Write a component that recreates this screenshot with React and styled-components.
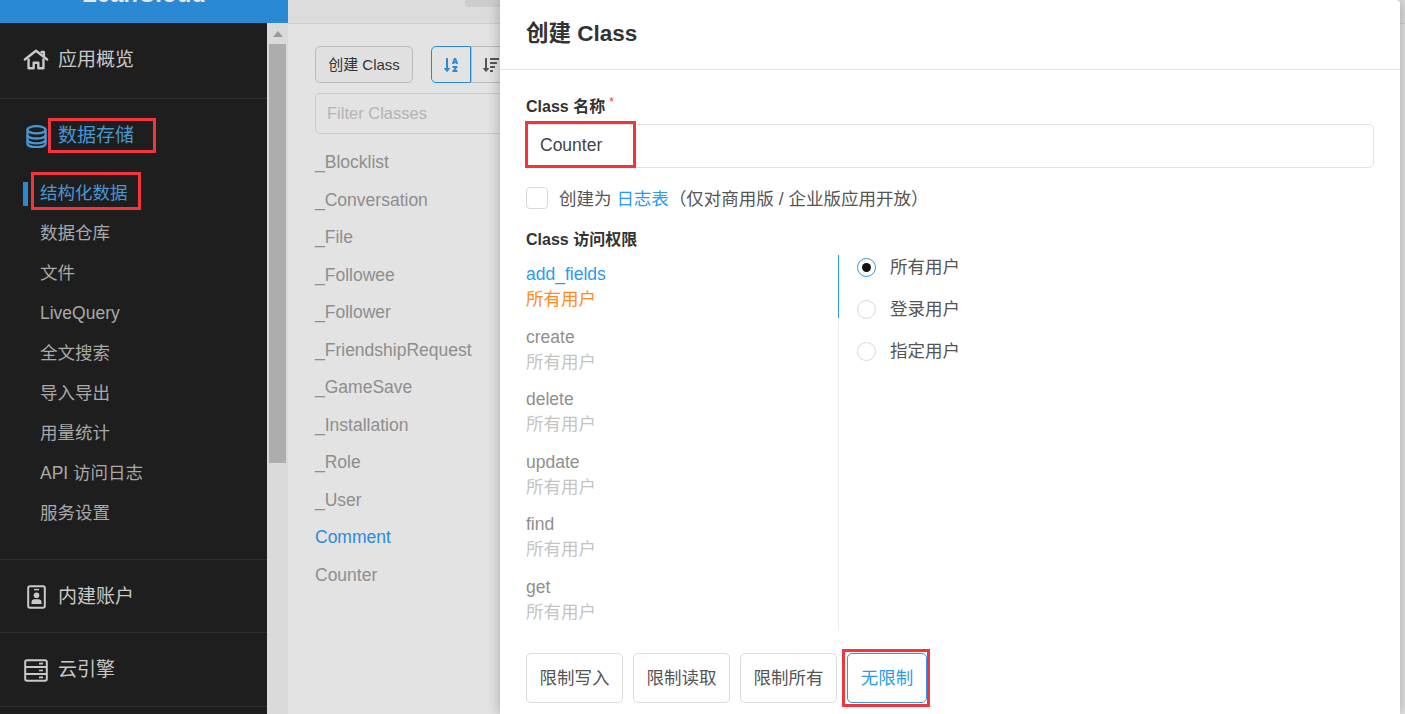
import React from "react";
import styled, { createGlobalStyle } from "styled-components";
import { FaSortAlphaDown, FaSortAmountDown } from "react-icons/fa";

const GlobalStyle = createGlobalStyle`
  html, body {
    margin: 0;
    padding: 0;
    height: 100%;
    overflow: hidden;
    font-family: "Liberation Sans", "Noto Sans CJK SC", sans-serif;
  }
  * { box-sizing: border-box; }
`;

const HomeIcon = () => (
  <svg width="28" height="23" viewBox="0 0 28 23" fill="none" stroke="currentColor" strokeWidth="2.6" strokeLinejoin="round" strokeLinecap="round">
    <path d="M2 11.5 14 2l12 9.5" />
    <path d="M20 3.5h2.5V8" />
    <path d="M6 11.5V21h5.5v-6h5v6H22v-9.5" />
  </svg>
);

const DatabaseIcon = () => (
  <svg width="21" height="23" viewBox="0 0 22 24" fill="none" stroke="currentColor" strokeWidth="2.4">
    <ellipse cx="11" cy="5" rx="9.5" ry="3.8" />
    <path d="M1.5 5v14.5c0 2.1 4.3 3.6 9.5 3.6s9.5-1.5 9.5-3.6V5" />
    <path d="M1.5 10.5c0 2.1 4.3 3.6 9.5 3.6s9.5-1.5 9.5-3.6" />
    <path d="M1.5 15.5c0 2.1 4.3 3.6 9.5 3.6s9.5-1.5 9.5-3.6" />
  </svg>
);

const ContactIcon = () => (
  <svg width="19" height="24" viewBox="0 0 19 24" fill="none">
    <rect x="1.2" y="1.2" width="16.6" height="21.6" rx="1.8" stroke="currentColor" strokeWidth="2" />
    <path d="M7 4.6h5" stroke="currentColor" strokeWidth="1.4" />
    <circle cx="9.5" cy="10.2" r="2.8" fill="currentColor" />
    <path d="M4.5 19v-2.2c0-1.6 1.4-2.6 3-2.6h4c1.6 0 3 1 3 2.6V19z" fill="currentColor" />
  </svg>
);

const ServerIcon = () => (
  <svg width="24" height="23" viewBox="0 0 24 23" fill="none" stroke="currentColor">
    <rect x="1.2" y="1.2" width="21.6" height="20.6" rx="1.8" strokeWidth="2" />
    <path d="M1.2 8h21.6M1.2 15h21.6" strokeWidth="1.8" />
    <path d="M15 4.6h4M15 11.5h4M15 18.4h4" strokeWidth="1.6" />
  </svg>
);

const subItems = ["数据仓库", "文件", "LiveQuery", "全文搜索", "导入导出", "用量统计", "API 访问日志", "服务设置"];
const classes = ["_Blocklist", "_Conversation", "_File", "_Followee", "_Follower", "_FriendshipRequest", "_GameSave", "_Installation", "_Role", "_User", "Comment", "Counter"];
const perms = ["add_fields", "create", "delete", "update", "find", "get"];
const scopes = ["所有用户", "登录用户", "指定用户"];
const presets = ["限制写入", "限制读取", "限制所有"];

const App = () => {
  return (
    <Page>
      <GlobalStyle />
      <TopRow>
        <Brand><BrandText>LeanCloud</BrandText></Brand>
        <TopBar>
          <Crumb>存储 结构化数据</Crumb>
          <CrumbPill />
        </TopBar>
      </TopRow>
      <BottomRow>
        <Sidebar>
          <NavSection $height={76}>
            <NavHead>
              <NavIcon><HomeIcon /></NavIcon>
              <NavLabel>应用概览</NavLabel>
            </NavHead>
          </NavSection>
          <NavSection $height={461}>
            <NavHead $active>
              <NavIcon $shift={3}><DatabaseIcon /></NavIcon>
              <NavLabel>
                <Marked $inset="-7px -22px -7px -10px">数据存储</Marked>
              </NavLabel>
            </NavHead>
            <SubList>
              <SubItem $active>
                <Marked $inset="-11px -13px -7px -9px">结构化数据</Marked>
              </SubItem>
              {subItems.map((s) => (
                <SubItem key={s}>{s}</SubItem>
              ))}
            </SubList>
          </NavSection>
          <NavSection $height={73}>
            <NavHead>
              <NavIcon $shift={2}><ContactIcon /></NavIcon>
              <NavLabel>内建账户</NavLabel>
            </NavHead>
          </NavSection>
          <NavSection $height={74}>
            <NavHead>
              <NavIcon $shift={2}><ServerIcon /></NavIcon>
              <NavLabel>云引擎</NavLabel>
            </NavHead>
          </NavSection>
        </Sidebar>
        <ScrollTrack>
          <ScrollArrow />
          <ScrollThumb />
        </ScrollTrack>
        <Main>
          <Toolbar>
            <CreateButton>创建 Class</CreateButton>
            <SortGroup>
              <SortButton $active><FaSortAlphaDown /></SortButton>
              <SortButton><FaSortAmountDown /></SortButton>
            </SortGroup>
          </Toolbar>
          <FilterInput placeholder="Filter Classes" readOnly />
          <ClassList>
            {classes.map((c) => (
              <ClassItem key={c} $active={c === "Comment"}>{c}</ClassItem>
            ))}
          </ClassList>
        </Main>
      </BottomRow>

      <Modal>
        <ModalHeader>创建 Class</ModalHeader>
        <ModalBody>
          <FieldLabel>Class 名称<Required>*</Required></FieldLabel>
          <NameField>
            <Marked $inset="-14px -34px -13px -15px">Counter</Marked>
          </NameField>
          <CheckRow>
            <CheckBox />
            <CheckText>创建为&nbsp;<InlineLink>日志表</InlineLink>（仅对商用版 / 企业版应用开放）</CheckText>
          </CheckRow>
          <PermTitle>Class 访问权限</PermTitle>
          <PermGrid>
            <PermList>
              {perms.map((p, i) => (
                <PermTab key={p} $active={i === 0}>
                  <PermName $active={i === 0}>{p}</PermName>
                  <PermValue $active={i === 0}>所有用户</PermValue>
                </PermTab>
              ))}
            </PermList>
            <ScopeList>
              {scopes.map((s, i) => (
                <ScopeRow key={s}>
                  <Radio $checked={i === 0} />
                  {s}
                </ScopeRow>
              ))}
            </ScopeList>
          </PermGrid>
          <PresetRow>
            {presets.map((p) => (
              <PresetButton key={p}>{p}</PresetButton>
            ))}
            <PresetButton $active>
              无限制
              <PresetMark />
            </PresetButton>
          </PresetRow>
        </ModalBody>
      </Modal>
    </Page>
  );
};

const Page = styled.div`
  position: relative;
  width: 1405px;
  height: 714px;
  overflow: hidden;
  background: #e3e3e3;
`;

const TopRow = styled.div`
  display: flex;
  height: 24px;
`;

const Brand = styled.div`
  width: 288px;
  height: 23px;
  background: #2a89d2;
  overflow: hidden;
  text-align: center;
`;

const BrandText = styled.div`
  margin-top: -19px;
  font-size: 24px;
  line-height: 26px;
  font-weight: 700;
  color: #e8e8e8;
`;

const TopBar = styled.div`
  flex: 1;
  display: flex;
  align-items: flex-start;
  gap: 5px;
  height: 24px;
  padding-left: 42px;
  background: #dcdcdc;
  border-bottom: 1px solid #cfcfcf;
  overflow: hidden;
`;

const Crumb = styled.div`
  margin-top: -16px;
  font-size: 16px;
  line-height: 18px;
  color: #777;
  width: 130px;
  white-space: nowrap;
`;

const CrumbPill = styled.div`
  width: 60px;
  height: 7px;
  background: #cdcdcd;
  border-radius: 0 0 4px 4px;
`;

const BottomRow = styled.div`
  display: flex;
  height: 690px;
  margin-top: -1px;
`;

const Sidebar = styled.nav`
  width: 267px;
  background: #1e1e1e;
  color: #c9c9c9;
  flex: none;
  height: 691px;
`;

const NavSection = styled.section`
  height: ${(p) => p.$height}px;
  border-bottom: 1px solid #2f2f2f;
`;

const NavHead = styled.div`
  display: flex;
  align-items: center;
  height: 72px;
  padding-left: 23px;
  font-size: 19px;
  color: ${(p) => (p.$active ? "#4a96d2" : "#c9c9c9")};
`;

const NavIcon = styled.span`
  display: flex;
  justify-content: center;
  align-items: center;
  width: 26px;
  margin-right: 9px;
  padding-top: ${(p) => p.$shift || 0}px;
`;

const NavLabel = styled.span`
  margin-top: -4px;
`;

const SubList = styled.div`
  display: flex;
  flex-direction: column;
  margin-top: 2px;
`;

const SubItem = styled.div`
  position: relative;
  height: 40px;
  line-height: 40px;
  padding-left: 40px;
  font-size: 17.5px;
  color: ${(p) => (p.$active ? "#4a96d2" : "#a9a9a9")};

  ${(p) => p.$active && `
    &::before {
      content: "";
      position: absolute;
      left: 23px;
      top: 9px;
      width: 5px;
      height: 24px;
      background: #2a89d2;
    }
  `}
`;

const Marked = styled.span`
  position: relative;

  &::after {
    content: "";
    position: absolute;
    inset: ${(p) => p.$inset};
    border: 3px solid #f5333a;
    pointer-events: none;
  }
`;

const ScrollTrack = styled.div`
  width: 21px;
  flex: none;
  height: 691px;
  background: #dadada;
`;

const ScrollArrow = styled.div`
  width: 0;
  height: 0;
  margin: 8px 0 0 6px;
  border-left: 5px solid transparent;
  border-right: 5px solid transparent;
  border-bottom: 6px solid #9a9a9a;
`;

const ScrollThumb = styled.div`
  width: 17px;
  height: 419px;
  margin: 7px 0 0 2px;
  background: #adadad;
`;

const Main = styled.main`
  flex: 1;
  padding: 23px 0 0 27px;
  color: #8e8e8e;
`;

const Toolbar = styled.div`
  display: flex;
  align-items: stretch;
  height: 37px;
  gap: 18px;
`;

const CreateButton = styled.button`
  width: 98px;
  padding: 0 0 2px;
  font: inherit;
  font-size: 15px;
  color: #333;
  background: #e0e0e0;
  border: 1px solid #bcbcbc;
  border-radius: 5px;
`;

const SortGroup = styled.div`
  display: flex;
`;

const SortButton = styled.button`
  display: flex;
  align-items: center;
  justify-content: center;
  width: 40px;
  padding: 0;
  font-size: 16px;
  color: ${(p) => (p.$active ? "#2a89d2" : "#555")};
  background: #e3e3e3;
  border: 1px solid ${(p) => (p.$active ? "#2a89d2" : "#bcbcbc")};
  border-radius: ${(p) => (p.$active ? "5px 0 0 5px" : "0 5px 5px 0")};
`;

const FilterInput = styled.input`
  display: block;
  width: 300px;
  height: 41px;
  margin-top: 10px;
  padding: 0 11px;
  font: inherit;
  font-size: 16.5px;
  background: #e3e3e3;
  border: 1px solid #cbcbcb;
  border-radius: 5px;

  &::placeholder { color: #b3b3b3; opacity: 1; }
`;

const ClassList = styled.div`
  margin-top: 10px;
`;

const ClassItem = styled.div`
  height: 37.5px;
  line-height: 37.5px;
  font-size: 17.5px;
  color: ${(p) => (p.$active ? "#2a8bdb" : "#8e8e8e")};
`;

const Modal = styled.div`
  position: absolute;
  left: 500px;
  top: 0;
  width: 900px;
  height: 714px;
  background: #fff;
  border-radius: 0 4px 0 0;
  box-shadow: 0 0 14px rgba(0, 0, 0, 0.28);
  color: #333;
`;

const ModalHeader = styled.div`
  height: 70px;
  padding: 0 26px 8px;
  display: flex;
  align-items: center;
  font-size: 22.5px;
  font-weight: 700;
  border-bottom: 1px solid #e2e2e2;
`;

const ModalBody = styled.div`
  padding: 25px 26px 0;
`;

const FieldLabel = styled.div`
  height: 29px;
  line-height: 24px;
  font-size: 16px;
  font-weight: 700;
`;

const Required = styled.sup`
  margin-left: 4px;
  font-size: 12px;
  line-height: 0;
  font-weight: 400;
  color: #f5333a;
`;

const NameField = styled.div`
  height: 44px;
  line-height: 40px;
  padding-left: 13px;
  font-size: 17.5px;
  color: #444;
  border: 1px solid #e2e2e2;
  border-radius: 5px;
`;

const CheckRow = styled.div`
  display: flex;
  align-items: center;
  height: 22px;
  margin-top: 19px;
  font-size: 17.5px;
  color: #555;
`;

const CheckBox = styled.span`
  width: 22px;
  height: 22px;
  margin-right: 11px;
  border: 1px solid #d9d9d9;
  border-radius: 4px;
`;

const CheckText = styled.span`
  margin-top: -2px;
`;

const InlineLink = styled.span`
  color: #2a9bf0;
`;

const PermTitle = styled.div`
  height: 24px;
  line-height: 24px;
  margin-top: 19px;
  font-size: 16px;
  font-weight: 700;
`;

const PermGrid = styled.div`
  display: grid;
  grid-template-columns: 313px 1fr;
  height: 375px;
  margin-top: 3px;
`;

const PermList = styled.div`
  border-right: 1px solid #ececec;
`;

const PermTab = styled.div`
  height: 62.5px;
  padding-top: 7px;
  margin-right: -1px;
  border-right: 1px solid ${(p) => (p.$active ? "#2a9bf0" : "transparent")};
  font-size: 17.5px;
  line-height: 25px;
`;

const PermName = styled.div`
  color: ${(p) => (p.$active ? "#2a9bf0" : "#8f8f8f")};
`;

const PermValue = styled.div`
  color: ${(p) => (p.$active ? "#ff8a1f" : "#c4c4c4")};
`;

const ScopeList = styled.div`
  display: flex;
  flex-direction: column;
  padding: 0 0 0 18px;
  margin-top: -10px;
`;

const ScopeRow = styled.div`
  display: flex;
  align-items: center;
  height: 42px;
  padding-bottom: 2px;
  font-size: 17.5px;
  color: #555;
`;

const Radio = styled.span`
  position: relative;
  width: 19px;
  height: 19px;
  margin: 4px 14px 0 0;
  border-radius: 50%;
  border: 1px solid ${(p) => (p.$checked ? "#2a9bf0" : "#d9d9d9")};

  ${(p) => p.$checked && `
    &::after {
      content: "";
      position: absolute;
      left: 4px;
      top: 4px;
      width: 9px;
      height: 9px;
      border-radius: 50%;
      background: #111;
    }
  `}
`;

const PresetRow = styled.div`
  display: flex;
  gap: 10px;
  margin-top: 23px;
`;

const PresetButton = styled.button`
  position: relative;
  width: ${(p) => (p.$active ? "80px" : "97px")};
  height: 50px;
  padding: 0 0 4px;
  font: inherit;
  font-size: 17.5px;
  color: ${(p) => (p.$active ? "#2a9bf0" : "#555")};
  background: #fff;
  border: 1px solid ${(p) => (p.$active ? "#2a9bf0" : "#dcdcdc")};
  border-radius: 5px;
`;

const PresetMark = styled.span`
  position: absolute;
  inset: -5px -4px -5px -6px;
  border: 3px solid #f5333a;
  pointer-events: none;
`;

export default App;
